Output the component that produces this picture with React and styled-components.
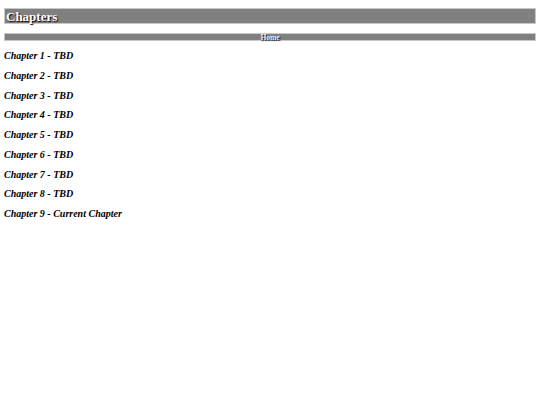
import React from "react";
import styled, { createGlobalStyle } from "styled-components";

const Global = createGlobalStyle`
  body {
    margin: 0;
    padding: 8px 4px;
    background: #ffffff;
    font-family: "Liberation Serif", "Times New Roman", serif;
  }
`;

const TitleBar = styled.h1`
  margin: 0;
  background: #808080;
  border: 1px solid #c8c8c8;
  height: 14px;
  line-height: 15px;
  font-size: 13px;
  font-weight: bold;
  color: #ffffff;
  text-shadow: 1px 1px 1px #000000;
  padding-left: 1px;
`;

const NavBar = styled.div`
  margin-top: 9px;
  background: #808080;
  border: 1px solid #c8c8c8;
  height: 6px;
  line-height: 7px;
  font-size: 7.5px;
  font-weight: bold;
  text-align: center;
  color: #f0f0f0;
  text-shadow: 1px 1px 1px #000000;
`;

const NavLink = styled.a`
  color: #f0f0f0;
  text-decoration: none;
  &:visited {
    color: #f0f0f0;
  }
`;

const ChapterList = styled.div`
  display: flex;
  flex-direction: column;
  gap: 4.75px;
  margin-top: 7px;
`;

const Chapter = styled.div`
  font-size: 10px;
  line-height: 15px;
  font-weight: bold;
  font-style: italic;
  color: #000000;
`;

const chapters = [
  "Chapter 1 - TBD",
  "Chapter 2 - TBD",
  "Chapter 3 - TBD",
  "Chapter 4 - TBD",
  "Chapter 5 - TBD",
  "Chapter 6 - TBD",
  "Chapter 7 - TBD",
  "Chapter 8 - TBD",
  "Chapter 9 - Current Chapter",
];

export default function App() {
  return (
    <>
      <Global />
      <TitleBar>Chapters</TitleBar>
      <NavBar>
        <NavLink href="#">Home</NavLink>
      </NavBar>
      <ChapterList>
        {chapters.map((c) => (
          <Chapter key={c}>{c}</Chapter>
        ))}
      </ChapterList>
    </>
  );
}
